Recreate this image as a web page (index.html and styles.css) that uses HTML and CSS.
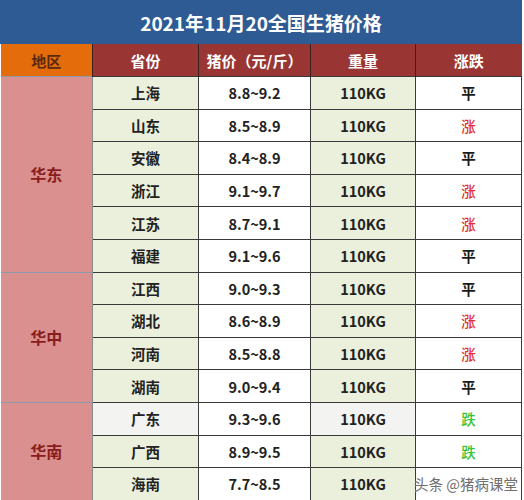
FILE: index.html
```html
<!DOCTYPE html>
<html lang="zh">
<head>
<meta charset="utf-8">
<link rel="stylesheet" href="styles.css">
</head>
<body>
<table class="price">
  <colgroup>
    <col class="c-region"><col class="c-prov"><col class="c-price"><col class="c-weight"><col class="c-chg">
  </colgroup>
  <thead>
    <tr class="title-row"><th colspan="5" class="title">2021年11月20全国生猪价格</th></tr>
    <tr class="head-row">
      <th class="h-region">地区</th>
      <th class="h">省份</th>
      <th class="h">猪价（元/斤）</th>
      <th class="h">重量</th>
      <th class="h">涨跌</th>
    </tr>
  </thead>
  <tbody>
    <tr><td class="region" rowspan="6">华东</td><td class="prov">上海</td><td class="val">8.8~9.2</td><td class="wt">110KG</td><td class="chg flat">平</td></tr>
    <tr><td class="prov">山东</td><td class="val">8.5~8.9</td><td class="wt">110KG</td><td class="chg up">涨</td></tr>
    <tr><td class="prov">安徽</td><td class="val">8.4~8.9</td><td class="wt">110KG</td><td class="chg flat">平</td></tr>
    <tr><td class="prov">浙江</td><td class="val">9.1~9.7</td><td class="wt">110KG</td><td class="chg up">涨</td></tr>
    <tr><td class="prov">江苏</td><td class="val">8.7~9.1</td><td class="wt">110KG</td><td class="chg up">涨</td></tr>
    <tr class="group-end"><td class="prov">福建</td><td class="val">9.1~9.6</td><td class="wt">110KG</td><td class="chg flat">平</td></tr>
    <tr><td class="region" rowspan="4">华中</td><td class="prov">江西</td><td class="val">9.0~9.3</td><td class="wt">110KG</td><td class="chg flat">平</td></tr>
    <tr><td class="prov">湖北</td><td class="val">8.6~8.9</td><td class="wt">110KG</td><td class="chg up">涨</td></tr>
    <tr><td class="prov">河南</td><td class="val">8.5~8.8</td><td class="wt">110KG</td><td class="chg up">涨</td></tr>
    <tr class="group-end"><td class="prov">湖南</td><td class="val">9.0~9.4</td><td class="wt">110KG</td><td class="chg flat">平</td></tr>
    <tr class="grey-row"><td class="region" rowspan="3">华南</td><td class="prov">广东</td><td class="val">9.3~9.6</td><td class="wt">110KG</td><td class="chg down">跌</td></tr>
    <tr><td class="prov">广西</td><td class="val">8.9~9.5</td><td class="wt">110KG</td><td class="chg down">跌</td></tr>
    <tr><td class="prov">海南</td><td class="val">7.7~8.5</td><td class="wt">110KG</td><td class="chg mark"><span class="watermark">头条 @猪病课堂</span></td></tr>
  </tbody>
</table>
</body>
</html>
```

FILE: styles.css
```css
html, body {
  margin: 0;
  padding: 0;
  background: #ffffff;
}
body {
  width: 524px;
  height: 500px;
  overflow: hidden;
  font-family: "Noto Sans CJK SC", "Noto Sans", sans-serif;
}
.price {
  width: 521px;
  border-collapse: collapse;
  table-layout: fixed;
}
.c-region { width: 92px; }
.c-prov { width: 106px; }
.c-price { width: 112px; }
.c-weight { width: 105px; }
.c-chg { width: 106px; }

.title-row th {
  height: 42px;
  padding: 0;
  background: #2f5b95;
  color: #ffffff;
  font-size: 19px;
  font-weight: 700;
  text-align: center;
  border: 1px solid #2f5b95;
}
.head-row th {
  height: 32px;
  padding: 0;
  color: #ffffff;
  font-size: 15px;
  font-weight: 700;
  text-align: center;
  background: #993634;
  border-left: 1.5px solid #3d2020;
  border-top: 1px solid #3d2020;
}
.head-row th.h-region {
  background: #e46c0a;
  color: #5a2a10;
  border-left: none;
}
tbody td {
  height: 31.6px;
  padding: 0;
  text-align: center;
  font-size: 14.5px;
  font-weight: 700;
  color: #222222;
  border: 1.5px solid #3a3a3a;
}
td.region {
  background: #d9908f;
  color: #8a1c1c;
  font-size: 16px;
  border-left: none;
  border-top: 1px solid #8c9aad;
  border-bottom: 1px solid #8c9aad;
  border-right: 1px solid #8a8a8a;
}
td.prov, td.wt {
  background: #ebf0dc;
}
td.val, td.chg {
  background: #ffffff;
}
.grey-row td.prov, .grey-row td.wt {
  background: #f3f3f1;
}
td.chg.up { color: #e0312e; font-weight: 500; }
td.chg.down { color: #3ac43a; font-weight: 500; }
td.chg.flat { color: #1a1a1a; }
td.chg.mark {
  text-align: left;
  padding-left: 0;
}
.watermark {
  display: block;
  white-space: nowrap;
  margin-left: -2px;
  font-size: 14.5px;
  font-weight: 400;
  color: #6f6f6f;
  text-shadow: 0 0 2px #ffffff;
}
```
